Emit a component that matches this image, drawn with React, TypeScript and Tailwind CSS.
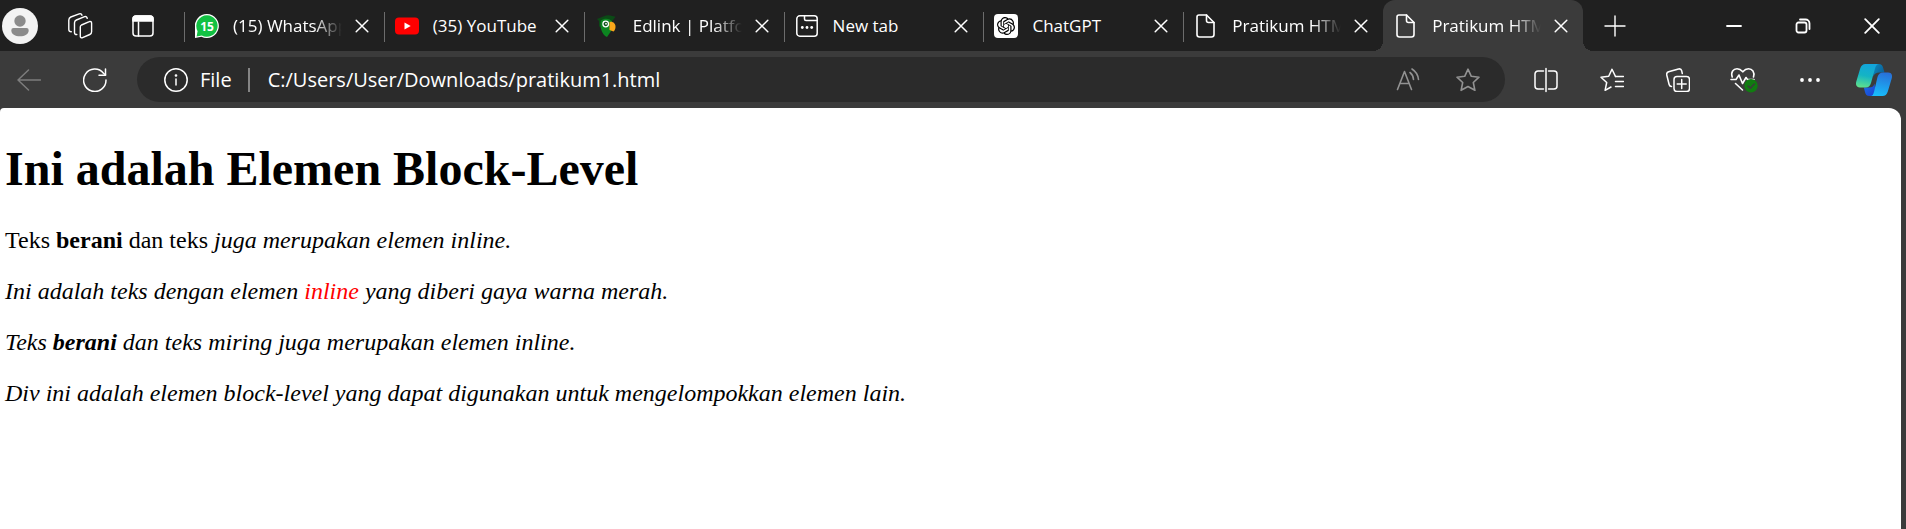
import type { ReactNode } from "react";
import { SiOpenai } from "react-icons/si";

type IconProps = { w?: number; h?: number; stroke?: number; className?: string; children: ReactNode };

function Icon({ w = 24, h = 24, stroke = 1.5, className = "", children }: IconProps) {
  return (
    <svg
      width={w}
      height={h}
      viewBox={`0 0 ${w} ${h}`}
      fill="none"
      stroke="currentColor"
      strokeWidth={stroke}
      strokeLinecap="round"
      strokeLinejoin="round"
      aria-hidden="true"
      className={`shrink-0 ${className}`}
    >
      {children}
    </svg>
  );
}

function WhatsAppIcon() {
  return (
    <Icon stroke={0}>
      <path d="M12 0a12 12 0 1 1-5.6 22.7L0 24V14A12 12 0 0 1 12 0z" fill="#fff" />
      <path d="M12 1.300a10.700 10.700 0 1 1-5.200 20.100L1.600 22.500l1-5.300A10.700 10.700 0 0 1 12 1.300z" fill="#12c143" />
      <text x="12" y="16.500" textAnchor="middle" fontSize="12" fontWeight="700" fill="#fff" fontFamily="Open Sans, sans-serif">
        15
      </text>
    </Icon>
  );
}

function YouTubeIcon() {
  return (
    <Icon stroke={0}>
      <rect x="0" y="3.500" width="24" height="17" rx="4" fill="#f00" />
      <path d="M9.500 8.400v7.200l6.200-3.600z" fill="#fff" />
    </Icon>
  );
}

function ParrotIcon() {
  return (
    <Icon stroke={0}>
      <path d="M2 5C7 3 11 .8 14 1.200l6.500 1.500-3 4L6 8.500 5.500 13 4 12.500V7z" fill="#0b4a16" />
      <path d="M6 6.500C9 4 15 4 17 7.500l-.5 9-4.500 6.500c-2.500-1-5-4-6-8-.8-3-.8-6 0-8.500z" fill="#0c8420" />
      <path d="M14.500 8c3.500-.8 6 1.500 6 5 0 1.800-.8 3.500-2 4.500l-4-1.500z" fill="#f9a61a" />
      <circle cx="10.700" cy="10" r="2.800" fill="#0a4a16" stroke="#fff" strokeWidth="1.300" />
      <circle cx="11" cy="9.700" r="1" fill="#dfeadf" />
    </Icon>
  );
}

function NewTabIcon() {
  return (
    <Icon>
      <rect x="1.800" y="1.800" width="20.400" height="20.400" rx="3" />
      <path d="M9.500 2v3a1.500 1.500 0 0 0 1.500 1.500h11" />
      <g fill="currentColor" stroke="none">
        <circle cx="7.300" cy="13.500" r="1.400" />
        <circle cx="12" cy="13.500" r="1.400" />
        <circle cx="16.700" cy="13.500" r="1.400" />
      </g>
    </Icon>
  );
}

function ChatGptIcon() {
  return (
    <span className="flex size-6 items-center justify-center rounded bg-white text-black">
      <SiOpenai size={18} aria-hidden="true" />
    </span>
  );
}

function DocumentIcon() {
  return (
    <Icon stroke={1.6}>
      <path d="M5 1h7.500L20 8.500V20.500a2.500 2.500 0 0 1-2.500 2.500H5.500A2.500 2.500 0 0 1 3 20.500V3a2 2 0 0 1 2-2z" />
      <path d="M12.500 1v5.500a2 2 0 0 0 2 2H20" />
    </Icon>
  );
}

function CloseIcon() {
  return (
    <Icon w={14} h={14} stroke={1.5}>
      <path d="M1.200 1.200l11.600 11.600M12.800 1.200L1.200 12.800" />
    </Icon>
  );
}

function CopilotIcon() {
  return (
    <svg width="36" height="32" viewBox="0 0 36 32" aria-hidden="true">
      <defs>
        <linearGradient id="cpLeft" x1="0.5" y1="0" x2="0.3" y2="1">
          <stop offset="0" stopColor="#12a5dc" />
          <stop offset="0.5" stopColor="#14b4c4" />
          <stop offset="1" stopColor="#5fe08c" />
        </linearGradient>
        <linearGradient id="cpRight" x1="0.6" y1="0" x2="0.4" y2="1">
          <stop offset="0" stopColor="#2870d8" />
          <stop offset="1" stopColor="#18bdfb" />
        </linearGradient>
        <linearGradient id="cpTop" x1="0" y1="0" x2="1" y2="0.6">
          <stop offset="0" stopColor="#0e8fc4" />
          <stop offset="1" stopColor="#0a5f96" />
        </linearGradient>
        <linearGradient id="cpBottom" x1="0" y1="0" x2="1" y2="1">
          <stop offset="0" stopColor="#1a6fe8" />
          <stop offset="1" stopColor="#1b3fd0" />
        </linearGradient>
      </defs>
      <path d="M16 0h6.500c3 0 4 1.500 4.700 4l1.300 4.500h-5c-3.500 0-5 1-6 4z" fill="url(#cpTop)" />
      <path d="M20 32h-6.500c-3 0-3.800-1.500-4.500-4l-1.200-4.500H13c3 0 4.500-1 5.500-4z" fill="url(#cpBottom)" />
      <path d="M9.500 0H23c-2 0-3.200 1.500-4 4.500l-4 14.500c-1 3-2.500 4.500-5.500 4.500H4c-3.500 0-4.700-2.500-3.700-6L4.200 4.500C5.200 1.500 6.800 0 9.500 0z" fill="url(#cpLeft)" />
      <path d="M26.500 32H14.500c2 0 2.800-1.500 3.600-4.500l3.400-14.500c1-3 2.500-4.500 5.500-4.500h5c3.500 0 4.700 2.500 3.700 6l-3.900 13c-1 3-2.600 4.500-5.300 4.500z" fill="url(#cpRight)" />
    </svg>
  );
}

type TabInfo = { title: string; icon: ReactNode; active?: boolean; fade?: boolean };

const tabs: TabInfo[] = [
  { title: "(15) WhatsApp", icon: <WhatsAppIcon />, fade: true },
  { title: "(35) YouTube", icon: <YouTubeIcon /> },
  { title: "Edlink | Platform", icon: <ParrotIcon />, fade: true },
  { title: "New tab", icon: <NewTabIcon /> },
  { title: "ChatGPT", icon: <ChatGptIcon /> },
  { title: "Pratikum HTML", icon: <DocumentIcon />, fade: true },
  { title: "Pratikum HTML", icon: <DocumentIcon />, active: true, fade: true },
];

function Tab({ title, icon, active, fade }: TabInfo) {
  return (
    <div
      role="tab"
      aria-selected={!!active}
      className={`relative flex min-w-0 flex-1 items-center pl-[11px] pr-0.5 ${active ? "rounded-t-xl bg-[#3b3b3b]" : ""}`}
    >
      {active ? (
        <>
          <span className="absolute -left-2.5 bottom-0 size-2.5 bg-[radial-gradient(circle_at_top_left,transparent_10px,#3b3b3b_10px)]" />
          <span className="absolute -right-2.5 bottom-0 size-2.5 bg-[radial-gradient(circle_at_top_right,transparent_10px,#3b3b3b_10px)]" />
        </>
      ) : (
        <span className="absolute left-0 top-3 h-[30px] w-px bg-[#6c6c6c]" />
      )}
      {icon}
      <span
        className={`ml-[14px] min-w-0 flex-1 overflow-hidden whitespace-nowrap text-[17px] leading-6 ${
          fade ? "[mask-image:linear-gradient(to_right,#000_74%,transparent)]" : ""
        }`}
      >
        {title}
      </span>
      <button type="button" aria-label={`Close ${title}`} className="flex h-8 w-10 items-center justify-center">
        <CloseIcon />
      </button>
    </div>
  );
}

function ToolButton({ label, children }: { label: string; children: ReactNode }) {
  return (
    <button type="button" aria-label={label} className="flex h-10 w-[66px] items-center justify-center">
      {children}
    </button>
  );
}

function TabStrip() {
  return (
    <div className="flex h-[51px] items-stretch bg-[#202020]">
      <button type="button" aria-label="Profile" className="ml-0.5 flex items-center">
        <Icon w={36} h={36} stroke={0}>
          <circle cx="18" cy="18" r="18" fill="#f3f3f3" />
          <circle cx="18" cy="13" r="5.700" fill="#8b8b8b" />
          <path d="M11.500 20h13a2.200 2.200 0 0 1 2.200 2.200c0 4-4 6-8.700 6s-8.700-2-8.700-6A2.200 2.200 0 0 1 11.500 20z" fill="#8b8b8b" />
        </Icon>
      </button>
      <button type="button" aria-label="Workspaces" className="ml-2.5 flex w-16 items-center justify-center">
        <Icon w={26} h={26} stroke={1.4}>
          <path d="M14.500 12l7.800-3.400a1.600 1.600 0 0 1 2.300 1.500v8.600a3 3 0 0 1-1.800 2.800l-7.200 3.200a1.600 1.600 0 0 1-2.300-1.500V14a2.200 2.200 0 0 1 1.200-2z" />
          <path d="M9.800 21.500c-1.500.2-2.300-.6-2.300-1.800V9.800A3.200 3.200 0 0 1 9.400 7l8.200-3.300c1.400-.5 2.600.2 2.600 1.700" />
          <path d="M4.300 18.800C2.600 18.800 1.800 18 1.800 16.600V7A3.500 3.500 0 0 1 3.800 4L12.200.9c1.300-.4 2.500.2 2.700 1.300" />
        </Icon>
      </button>
      <button type="button" aria-label="Tab actions" className="mr-2.5 flex w-[62px] items-center justify-center">
        <Icon w={22} h={22}>
          <rect x="1" y="1" width="20" height="20" rx="3" />
          <path d="M1 6V4a3 3 0 0 1 3-3h14a3 3 0 0 1 3 3v2z" fill="currentColor" />
          <path d="M6.500 7v14" />
        </Icon>
      </button>
      <div role="tablist" className="flex min-w-0 max-w-[1399px] flex-1">
        {tabs.map((tab, i) => (
          <Tab key={i} {...tab} />
        ))}
      </div>
      <button type="button" aria-label="New tab" className="flex w-16 items-center justify-center">
        <Icon w={22} h={22} stroke={1.4}>
          <path d="M11 1v20M1 11h20" />
        </Icon>
      </button>
      <div className="ml-auto flex">
        <button type="button" aria-label="Minimize" className="flex w-[69px] items-center justify-center">
          <Icon w={16} h={16} stroke={1.8}>
            <path d="M1 8h14" />
          </Icon>
        </button>
        <button type="button" aria-label="Restore" className="flex w-[69px] items-center justify-center">
          <Icon w={16} h={16} stroke={1.8}>
            <rect x="1.500" y="4.500" width="10" height="10" rx="2" />
            <path d="M5 1.500h5.500a4 4 0 0 1 4 4V11" />
          </Icon>
        </button>
        <button type="button" aria-label="Close window" className="flex w-[69px] items-center justify-center">
          <Icon w={16} h={16} stroke={1.8}>
            <path d="M1.200 1.200l13.600 13.600M14.800 1.200L1.200 14.800" />
          </Icon>
        </button>
      </div>
    </div>
  );
}

function Toolbar() {
  return (
    <div className="flex h-[57px] items-center bg-[#3b3b3b]">
      <button type="button" aria-label="Back" className="flex h-10 w-[58px] items-center justify-center text-[#7d7d7d]">
        <Icon>
          <path d="M23.500 12H1M11.500 2L1 12l10.500 10" />
        </Icon>
      </button>
      <button type="button" aria-label="Refresh" className="mr-[5px] flex h-10 w-[74px] items-center justify-center">
        <Icon>
          <path d="M23 12A11.200 11.200 0 1 1 20.500 5.200L22.500 7" />
          <path d="M22.500 1v6.200h-6.500" />
        </Icon>
      </button>
      <div className="flex h-[45px] min-w-0 flex-1 items-center rounded-full bg-[#2b2b2b] pl-[27px] pr-[25px] text-[20px] leading-7">
        <button type="button" className="flex items-center gap-3">
          <Icon>
            <circle cx="12" cy="12" r="11.200" />
            <path d="M12 11v6" />
            <circle cx="12" cy="7.500" r="0.600" fill="currentColor" />
          </Icon>
          <span>File</span>
        </button>
        <span className="ml-4 h-6 w-0.5 bg-[#858585]" />
        <input
          type="text"
          aria-label="Address"
          defaultValue="C:/Users/User/Downloads/pratikum1.html"
          className="ml-[18px] min-w-0 flex-1 bg-transparent outline-none"
        />
        <button type="button" aria-label="Read aloud" className="mr-9 flex text-[#929292]">
          <Icon stroke={1.6}>
            <path d="M1.500 21.500L8.500 3.500l7 18M4 15.500h9" />
            <path d="M14 4.500c2 1.500 3.300 3.800 3.500 7M16 1c3.500 2.200 6 5.800 6.500 10.500" />
          </Icon>
        </button>
        <button type="button" aria-label="Add to favorites" className="flex text-[#929292]">
          <Icon stroke={1.6}>
            <path d="M12 1.200l3.300 7.100 7.700.9-5.700 5.300 1.600 7.800L12 18.500l-6.900 3.800 1.600-7.800L1 9.200l7.700-.9z" />
          </Icon>
        </button>
      </div>
      <div className="ml-2 flex items-center">
        <ToolButton label="Split screen">
          <Icon w={24} h={26}>
            <path d="M9.500 4H4a3 3 0 0 0-3 3v12a3 3 0 0 0 3 3h5.500M14.500 4H20a3 3 0 0 1 3 3v12a3 3 0 0 1-3 3h-5.500M12 1.500v23" />
          </Icon>
        </ToolButton>
        <ToolButton label="Favorites">
          <Icon>
            <path d="M15.500 8.500L12 1.200 8.700 8.300 1 9.200l5.700 5.300-1.600 7.800L11 19" />
            <path d="M15.500 8.500h8M15.500 13.500h8M15.500 18.500h8" />
          </Icon>
        </ToolButton>
        <ToolButton label="Collections">
          <Icon>
            <rect x="8" y="8.500" width="15.500" height="15" rx="3" />
            <path d="M15.700 11.500v9M11.200 16h9" />
            <path d="M5.500 18.500c-1.200 0-2-.6-2.300-1.700L.8 7.200C.4 5.600 1 4.300 2.600 3.800L12.500 1c1.600-.4 2.800.3 3.200 1.800l.6 2.700" />
          </Icon>
        </ToolButton>
        <ToolButton label="Browser essentials">
          <Icon w={28} h={26} stroke={1.6}>
            <path d="M2.200 10C.5 5 3.500 1.800 7 1.800c2.300 0 4 1 5.800 3 1.700-2 3.400-3 5.700-3 3.700 0 6.500 3.200 5 8.200" />
            <path d="M1 12.500h5l3-4.500 3.500 8.500 3.500-6 1.500 2H24" />
            <path d="M5.500 16.500l7 6.500" />
            <circle cx="21" cy="18.800" r="6.700" fill="#107c10" stroke="none" />
            <path d="M18 19l2.300 2.200 4-4.200" stroke="#3b3b3b" />
          </Icon>
        </ToolButton>
        <ToolButton label="Settings and more">
          <Icon w={22} h={22} stroke={0}>
            <circle cx="3" cy="11" r="1.900" fill="currentColor" />
            <circle cx="11" cy="11" r="1.900" fill="currentColor" />
            <circle cx="19" cy="11" r="1.900" fill="currentColor" />
          </Icon>
        </ToolButton>
        <button type="button" aria-label="Copilot" className="flex w-[63px] items-center justify-center pr-0.5">
          <CopilotIcon />
        </button>
      </div>
    </div>
  );
}

export default function App() {
  return (
    <div className="flex min-h-screen flex-col bg-[#3b3b3b] font-['Open_Sans',sans-serif] text-white">
      <TabStrip />
      <Toolbar />
      <main className="mr-[5px] flex-1 rounded-tl rounded-tr-xl bg-white px-[5px] pt-[33px] font-['Liberation_Serif',serif] text-[24px] leading-[27px] text-black">
        <h1 className="mb-[31px] text-[48px] font-bold leading-[55px]">Ini adalah Elemen Block-Level</h1>
        <p className="mb-6">
          Teks <strong>berani</strong> dan teks <em>juga merupakan elemen inline.</em>
        </p>
        <p className="mb-6 italic">
          Ini adalah teks dengan elemen <span className="text-[#f00]">inline</span> yang diberi gaya warna merah.
        </p>
        <p className="mb-6 italic">
          Teks <strong>berani</strong> dan teks miring juga merupakan elemen inline.
        </p>
        <div className="italic">Div ini adalah elemen block-level yang dapat digunakan untuk mengelompokkan elemen lain.</div>
      </main>
    </div>
  );
}
